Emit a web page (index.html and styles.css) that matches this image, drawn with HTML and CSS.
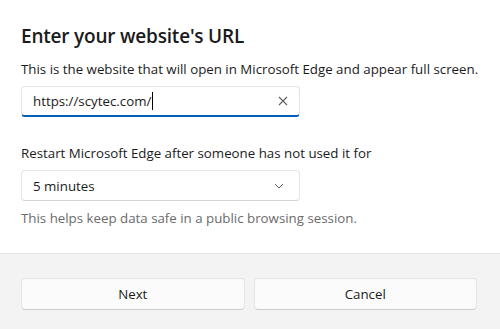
FILE: index.html
```html
<!DOCTYPE html>
<html lang="en">
<head>
  <meta charset="UTF-8">
  <title>Enter your website's URL</title>
  <link rel="stylesheet" href="styles.css">
</head>
<body>
  <div class="dialog">
    <div class="content">
      <h1>Enter your website's URL</h1>
      <p class="label">This is the website that will open in Microsoft Edge and appear full screen.</p>
      <div class="textbox">
        <span class="value">https://scytec.com/<span class="caret"></span></span>
        <svg class="clear" width="10" height="10" viewBox="0 0 10 10">
          <path d="M1 1 L9 9 M9 1 L1 9" stroke="#5f5f5f" stroke-width="1.1" fill="none"/>
        </svg>
      </div>

      <p class="label second">Restart Microsoft Edge after someone has not used it for</p>
      <div class="select">
        <span>5 minutes</span>
        <svg class="chevron" width="10" height="6" viewBox="0 0 10 6">
          <path d="M1 1 L5 5 L9 1" stroke="#5f5f5f" stroke-width="1" fill="none"/>
        </svg>
      </div>
      <p class="hint">This helps keep data safe in a public browsing session.</p>
    </div>

    <div class="footer">
      <button class="btn">Next</button>
      <button class="btn">Cancel</button>
    </div>
  </div>
</body>
</html>
```

FILE: styles.css
```css
* {
  margin: 0;
  padding: 0;
  box-sizing: border-box;
}
body {
  font-family: "Open Sans", "Noto Sans", sans-serif;
  background: #fff;
  color: #1b1b1b;
  width: 500px;
  height: 329px;
  overflow: hidden;
}
.dialog {
  display: flex;
  flex-direction: column;
  height: 329px;
}
.content {
  padding: 24px 21px 0 21px;
  height: 253px;
}
h1 {
  font-size: 19px;
  font-weight: 600;
  line-height: 24px;
  letter-spacing: -0.2px;
}
.label {
  font-size: 13.3px;
  line-height: 18px;
  margin-top: 12px;
}
.label.second {
  margin-top: 27px;
}
.textbox {
  margin-top: 8px;
  width: 279px;
  height: 31px;
  border: 1px solid #e5e5e5;
  border-bottom: 2px solid #005fb8;
  border-radius: 4px;
  display: flex;
  align-items: center;
  justify-content: space-between;
  padding: 0 11px 0 11px;
  font-size: 13.3px;
}
.value {
  display: flex;
  align-items: center;
}
.caret {
  display: inline-block;
  width: 1px;
  height: 18px;
  background: #000;
  margin-left: 1px;
}
.select {
  margin-top: 8px;
  width: 279px;
  height: 31px;
  border: 1px solid #e5e5e5;
  border-bottom-color: #d4d4d4;
  border-radius: 4px;
  display: flex;
  align-items: center;
  justify-content: space-between;
  padding: 0 15px 0 11px;
  font-size: 13.3px;
}
.hint {
  margin-top: 8px;
  font-size: 13.3px;
  line-height: 18px;
  color: #6b6b6b;
}
.footer {
  flex: 1;
  background: #f3f3f3;
  border-top: 1px solid #e5e5e5;
  display: flex;
  gap: 9px;
  padding: 24px 23px 0 21px;
}
.btn {
  flex: 1;
  height: 32px;
  background: #fbfbfb;
  border: 1px solid #e5e5e5;
  border-bottom-color: #cccccc;
  border-radius: 4px;
  font-family: inherit;
  font-size: 13.3px;
  color: #1b1b1b;
}
```
